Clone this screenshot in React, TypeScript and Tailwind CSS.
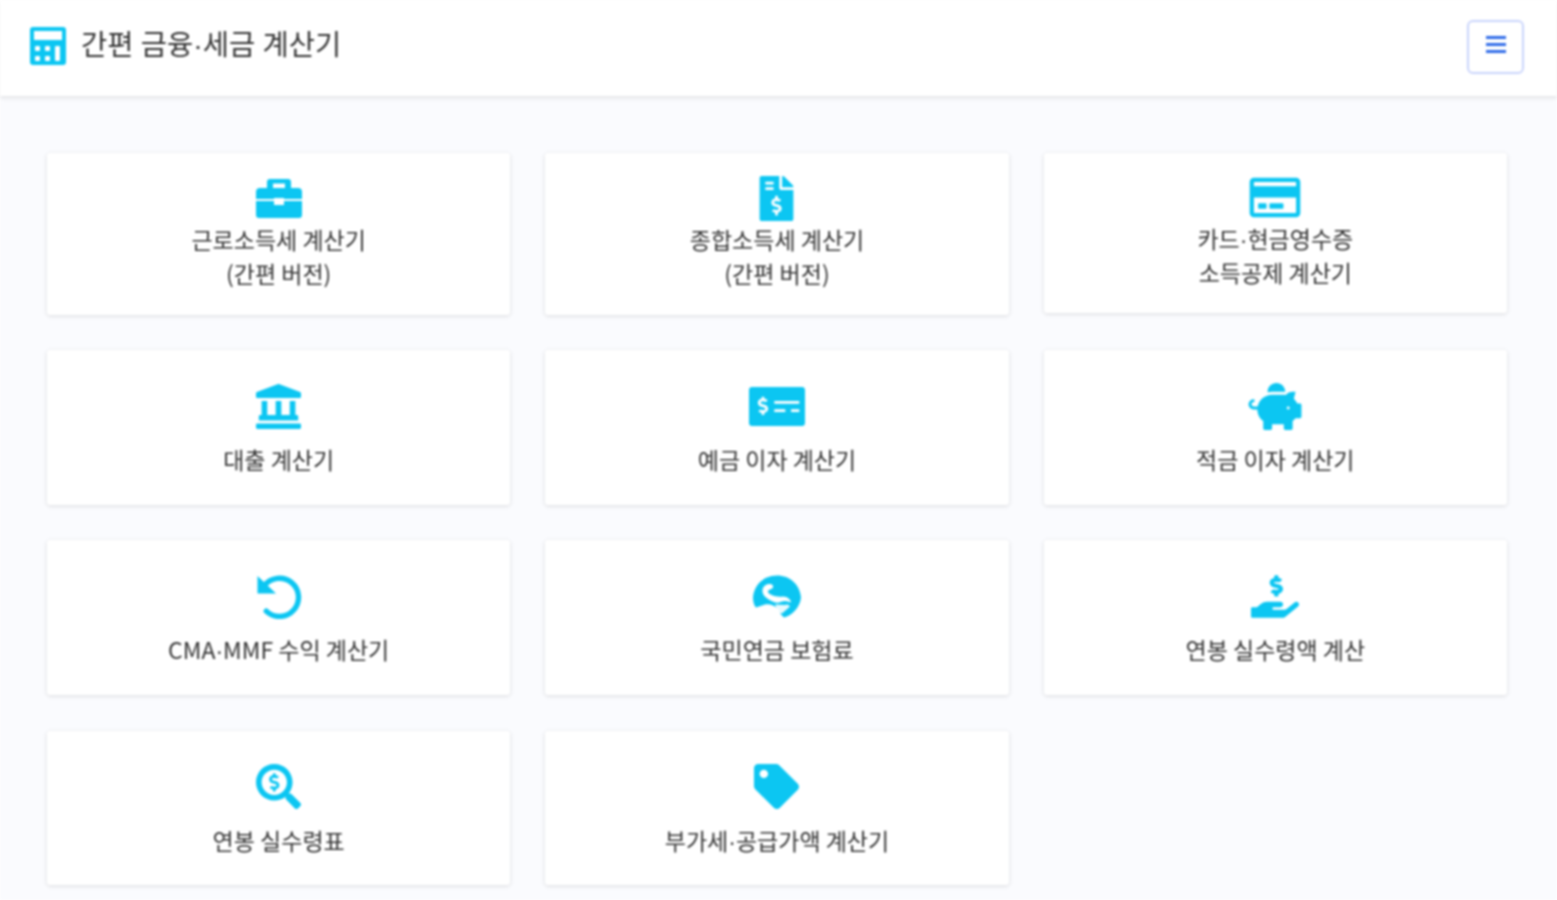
import type { ReactNode } from "react";
import {
  FaFileInvoiceDollar,
  FaRegCreditCard,
  FaLandmark,
  FaMoneyCheckAlt,
  FaPiggyBank,
  FaHandHoldingUsd,
  FaSearchDollar,
  FaTag,
} from "react-icons/fa";

type Calc = {
  icon: ReactNode;
  lines: string[];
  box: string;
};

const iconClass = "h-[45px] w-auto text-[#0cc6f2]";
const twoLine = "pt-[22.5px] pb-[24.5px] gap-[1.5px]";
const oneLine = "pt-[33.5px] pb-[28.5px] gap-[13.5px]";

function BriefcaseIcon() {
  return (
    <svg viewBox="0 0 46 45" className="h-[45px] w-[46px] text-[#0cc6f2]" fill="currentColor">
      <path
        fillRule="evenodd"
        d="M14 3h18a3 3 0 0 1 3 3v6h7a4 4 0 0 1 4 4v7H28v-1H18v1H0v-7a4 4 0 0 1 4-4h7V6a3 3 0 0 1 3-3zm3 4.500V12h12V7.500H17z"
      />
      <path d="M0 25h18v4h10v-4h18v14a3 3 0 0 1-3 3H3a3 3 0 0 1-3-3z" />
    </svg>
  );
}

function UndoIcon() {
  return (
    <svg viewBox="0 0 46 46" className="h-[45px] w-[46px] text-[#0cc6f2]" fill="none">
      <path d="M8 12A19.500 19.500 0 1 1 10 38" stroke="currentColor" strokeWidth="5.500" strokeLinecap="round" />
      <path d="M1 2v18h19z" fill="currentColor" />
    </svg>
  );
}

// 지구본 위에 손 모양이 겹친 아이콘
function GlobeHandIcon() {
  return (
    <svg viewBox="0 0 48 44" className="h-[45px] w-[48px] text-[#0cc6f2]" fill="currentColor">
      <path d="M24 1C11 1 1 10 0 23c0 4 1 8 3 10l9-3c5-1 9 1 13 4l3 6 3 3c8-2 16-10 17-20C47 10 37 1 24 1z" />
      <path
        d="M12 11c5-3 9-1 8 2-1 2-5 2-5 4 0 3 8 6 15 5 4 0 8 3 8 6-4-2-8-2-12 0-4 1-9-2-13-5-4-3-5-9-1-12z"
        fill="#ffffff"
      />
      <path d="M22 30c5 0 9 1 13 0l2 2-8 7-3-1z" fill="#ffffff" opacity="0.9" />
    </svg>
  );
}

// 가운뎃점은 좁은 글꼴로
function Label({ text }: { text: string }) {
  const parts = text.split("·");
  return (
    <>
      {parts.map((p, i) => (
        <span key={p}>
          {i > 0 && <span className="font-['Liberation_Sans',sans-serif] leading-none">·</span>}
          {p}
        </span>
      ))}
    </>
  );
}

// 계산기 목록
const calculators: Calc[] = [
  { icon: <BriefcaseIcon />, lines: ["근로소득세 계산기", "(간편 버전)"], box: twoLine },
  { icon: <FaFileInvoiceDollar className={iconClass} />, lines: ["종합소득세 계산기", "(간편 버전)"], box: twoLine },
  { icon: <FaRegCreditCard className="h-[45px] w-[52px] text-[#0cc6f2]" />, lines: ["카드·현금영수증", "소득공제 계산기"], box: "pt-[22px] pb-[24px] gap-[0.5px]" },
  { icon: <FaLandmark className={iconClass} />, lines: ["대출 계산기"], box: oneLine },
  { icon: <FaMoneyCheckAlt className="h-[45px] w-[56px] text-[#0cc6f2]" />, lines: ["예금 이자 계산기"], box: oneLine },
  { icon: <FaPiggyBank className="h-[47px] w-[54px] text-[#0cc6f2]" />, lines: ["적금 이자 계산기"], box: "pt-[32.5px] pb-[28.5px] gap-[12.5px]" },
  { icon: <UndoIcon />, lines: ["CMA·MMF 수익 계산기"], box: oneLine },
  { icon: <GlobeHandIcon />, lines: ["국민연금 보험료"], box: oneLine },
  { icon: <FaHandHoldingUsd className="h-[45px] w-[48px] text-[#0cc6f2]" />, lines: ["연봉 실수령액 계산"], box: oneLine },
  { icon: <FaSearchDollar className={iconClass} />, lines: ["연봉 실수령표"], box: oneLine },
  { icon: <FaTag className={iconClass} />, lines: ["부가세·공급가액 계산기"], box: oneLine },
];

function CalculatorLogo() {
  return (
    <svg viewBox="0 0 36 38" className="h-[38px] w-[36px] text-[#0cc6f2]" fill="currentColor">
      <rect width="36" height="38" rx="3" />
      <g fill="#ffffff">
        <rect x="4" y="4" width="28" height="9" />
        <rect x="5" y="19" width="5" height="5" rx="1" />
        <rect x="15" y="19" width="5" height="5" rx="1" />
        <rect x="5" y="29" width="5" height="5" rx="1" />
        <rect x="15" y="29" width="5" height="5" rx="1" />
        <rect x="25" y="19" width="5" height="15" rx="1" />
      </g>
    </svg>
  );
}

export default function App() {
  return (
    <div className="min-h-[900px] bg-[#fafbfe] font-['Noto_Sans_CJK_KR','Noto_Sans',sans-serif] text-[#333333] blur-[1px]">
      <header className="flex h-[96px] items-center justify-between bg-white pl-[30px] pr-[33px] shadow-[0_2px_4px_rgba(0,0,0,0.1)]">
        <div className="-mt-[4px] flex items-center gap-[15px]">
          <CalculatorLogo />
          <span className="-mt-[4px] text-[28.5px] leading-none [word-spacing:1px]">
            <Label text="간편 금융·세금 계산기" />
          </span>
        </div>
        <button className="-mt-[3px] flex h-[54px] w-[57px] items-center justify-center rounded-md border-2 border-[#c9d4fb] bg-white pb-[4px]">
          <span className="flex w-[20px] flex-col gap-[4px]">
            <span className="h-[3px] bg-[#2f6be8]" />
            <span className="h-[3px] bg-[#2f6be8]" />
            <span className="h-[3px] bg-[#2f6be8]" />
          </span>
        </button>
      </header>

      <main className="grid grid-cols-3 items-start gap-x-[35px] gap-y-[35.7px] pl-[47px] pr-[50px] pt-[57px]">
        {calculators.map((c) => (
          <div
            key={c.lines[0]}
            className={`flex flex-col items-center rounded-[3px] bg-white shadow-[0_1px_4px_rgba(0,0,0,0.13)] ${c.box}`}
          >
            {c.icon}
            <div className="text-center text-[23px] leading-[34px]">
              {c.lines.map((l) => (
                <div key={l}>
                  <Label text={l} />
                </div>
              ))}
            </div>
          </div>
        ))}
      </main>
    </div>
  );
}
